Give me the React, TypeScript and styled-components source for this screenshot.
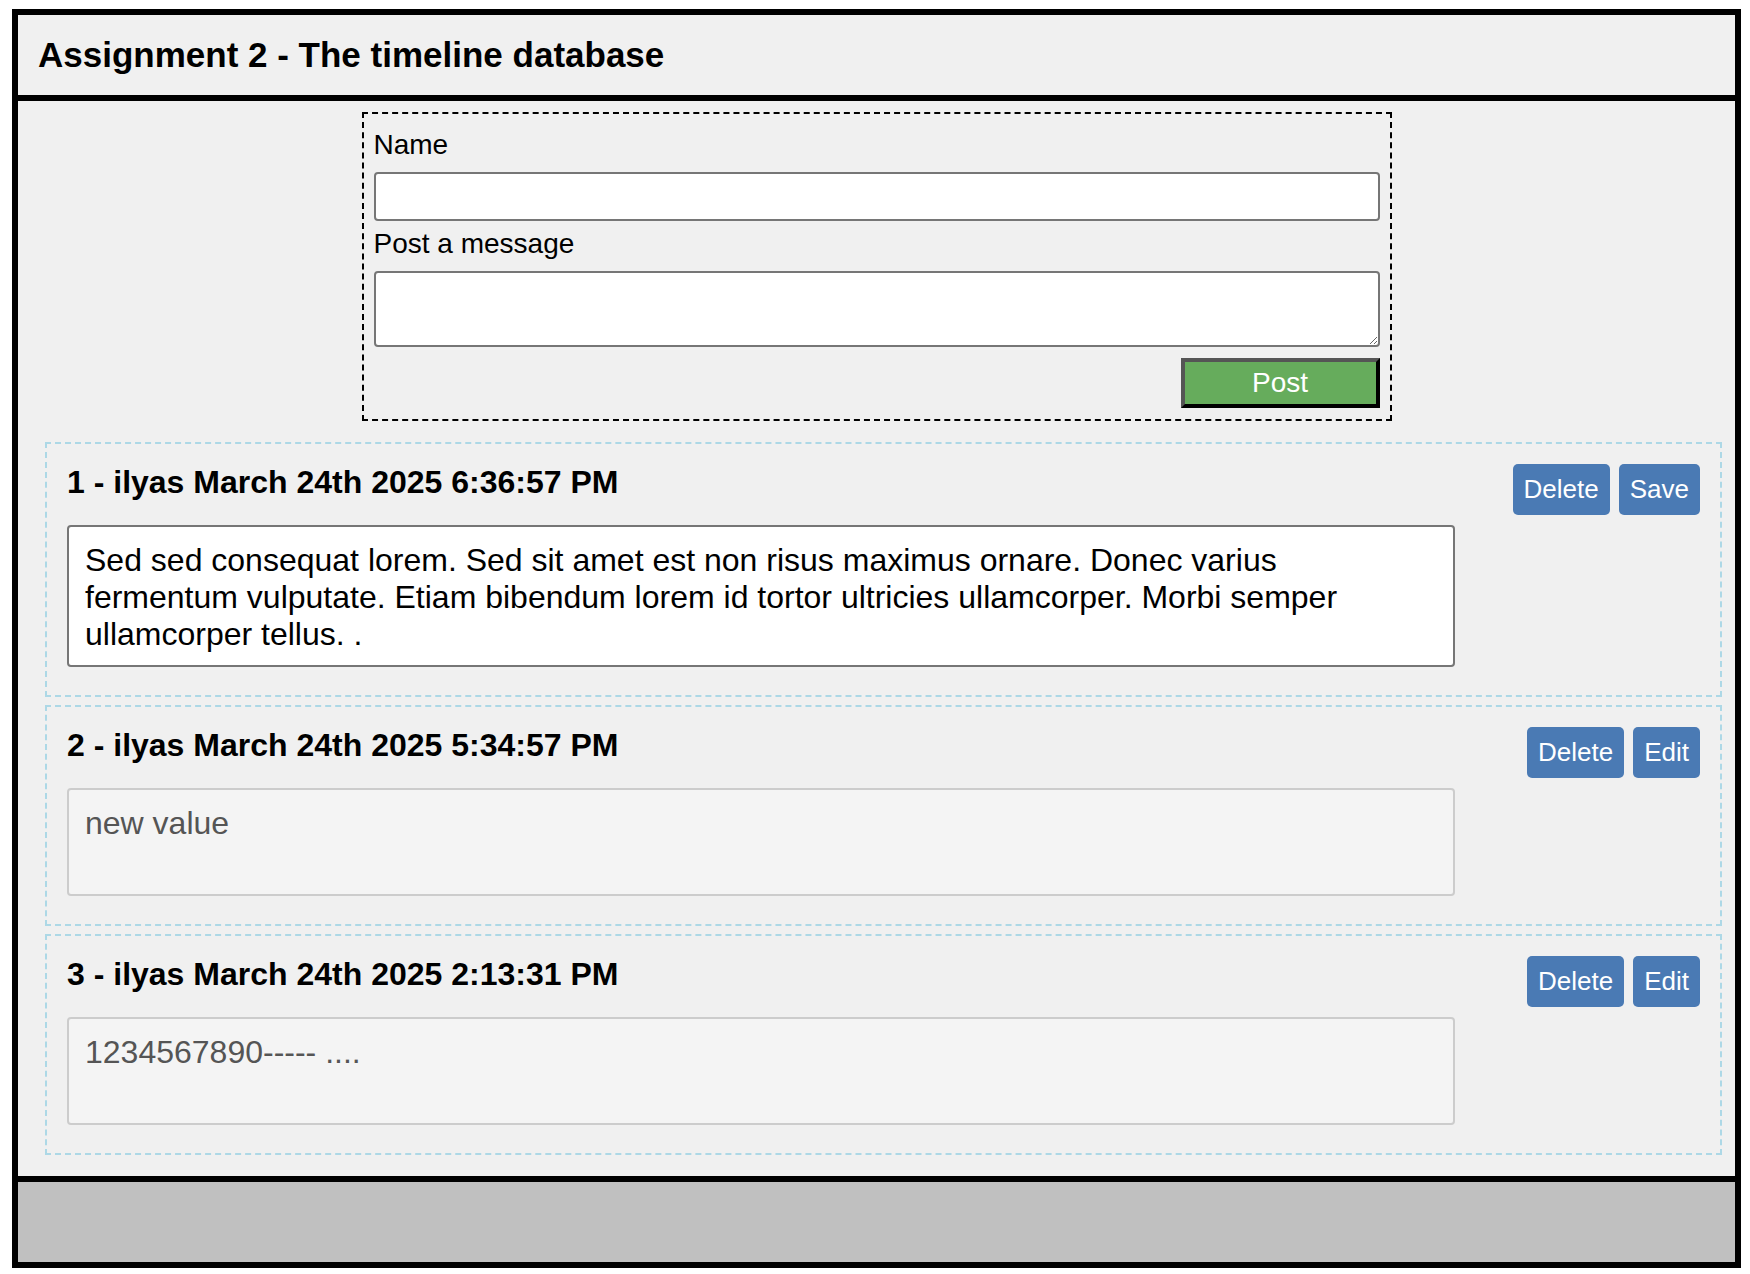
import React from 'react';
import styled, { createGlobalStyle } from 'styled-components';

const GlobalStyle = createGlobalStyle`
  html, body {
    margin: 0;
    padding: 0;
    background: #ffffff;
  }
  body {
    font-family: "Liberation Sans", Arial, sans-serif;
    color: #000;
  }
  *, *::before, *::after {
    box-sizing: border-box;
  }
`;

const Frame = styled.div`
  margin: 9px 9px 6px 12px;
  border: 6px solid #000;
  display: flex;
  flex-direction: column;
`;

const Header = styled.header`
  background: #f0f0f0;
  border-bottom: 6px solid #000;
  padding: 20px 20px;
`;

const Title = styled.h1`
  margin: 0;
  font-size: 35px;
  font-weight: bold;
  line-height: 40px;
`;

const Main = styled.main`
  background: #f0f0f0;
  padding: 11px 0 21px;
  display: flex;
  flex-direction: column;
`;

const PostForm = styled.form`
  width: 1030px;
  margin: 0 auto 21px;
  border: 2px dashed #000;
  padding: 15px 10px 11px;
  display: flex;
  flex-direction: column;
`;

const FieldLabel = styled.label`
  display: block;
  font-size: 28px;
  line-height: 32px;
  margin-bottom: 11px;
`;

const NameInput = styled.input`
  display: block;
  width: 100%;
  height: 49px;
  margin: 0 0 7px;
  padding: 0 8px;
  border: 2px solid #767676;
  border-radius: 4px;
  background: #fff;
  font-family: inherit;
  font-size: 28px;
`;

const MessageInput = styled.textarea`
  display: block;
  width: 100%;
  height: 76px;
  margin: 0 0 11px;
  padding: 6px 8px;
  border: 2px solid #767676;
  border-radius: 4px;
  background: #fff;
  font-family: inherit;
  font-size: 28px;
`;

const PostButton = styled.button`
  align-self: flex-end;
  width: 199px;
  height: 50px;
  padding: 0;
  background: #66ac5c;
  color: #fff;
  font-family: inherit;
  font-size: 28px;
  border-width: 4px;
  border-style: solid;
  border-color: #555 #000 #000 #555;
`;

const PostCard = styled.article`
  margin: 0 13px 8px 27px;
  border: 2px dashed #add8e6;
  padding: 20px;
  display: flex;
  justify-content: space-between;
  align-items: flex-start;

  &:last-child {
    margin-bottom: 0;
  }
`;

const PostBody = styled.div`
  flex: 0 0 85%;
`;

const PostHeading = styled.h2`
  margin: 0 0 24px;
  font-size: 32px;
  font-weight: bold;
  line-height: 37px;
`;

const PostText = styled.textarea<{ $editing: boolean; $height: number }>`
  display: block;
  width: 100%;
  height: ${(p) => p.$height}px;
  margin: 0 0 8px;
  padding: 15px 40px 15px 16px;
  border: 2px solid ${(p) => (p.$editing ? '#767676' : '#cccccc')};
  border-radius: 4px;
  background: ${(p) => (p.$editing ? '#ffffff' : '#f4f4f4')};
  color: ${(p) => (p.$editing ? '#000000' : '#555555')};
  font-family: inherit;
  font-size: 32px;
  line-height: 1.15;
  resize: none;
  overflow: hidden;
`;

const Actions = styled.div`
  display: flex;
  gap: 9px;
`;

const ActionButton = styled.button`
  background: #4a7ab4;
  color: #fff;
  border: none;
  border-radius: 5px;
  font-family: inherit;
  font-size: 26px;
  line-height: 31px;
  padding: 10px 11px;
`;

const Footer = styled.footer`
  height: 86px;
  background: #c0c0c0;
  border-top: 6px solid #000;
`;

type Entry = {
  id: number;
  name: string;
  date: string;
  text: string;
  editing: boolean;
  height: number;
};

const entries: Entry[] = [
  {
    id: 1,
    name: 'ilyas',
    date: 'March 24th 2025 6:36:57 PM',
    text:
      'Sed sed consequat lorem. Sed sit amet est non risus maximus ornare. Donec varius fermentum vulputate. Etiam bibendum lorem id tortor ultricies ullamcorper. Morbi semper ullamcorper tellus. .',
    editing: true,
    height: 142,
  },
  {
    id: 2,
    name: 'ilyas',
    date: 'March 24th 2025 5:34:57 PM',
    text: 'new value',
    editing: false,
    height: 108,
  },
  {
    id: 3,
    name: 'ilyas',
    date: 'March 24th 2025 2:13:31 PM',
    text: '1234567890----- ....',
    editing: false,
    height: 108,
  },
];

export default function App() {
  return (
    <>
      <GlobalStyle />
      <Frame>
        <Header>
          <Title>Assignment 2 - The timeline database</Title>
        </Header>
        <Main>
          <PostForm onSubmit={(e) => e.preventDefault()}>
            <FieldLabel htmlFor="name">Name</FieldLabel>
            <NameInput id="name" type="text" />
            <FieldLabel htmlFor="message">Post a message</FieldLabel>
            <MessageInput id="message" />
            <PostButton type="submit">Post</PostButton>
          </PostForm>
          {entries.map((e) => (
            <PostCard key={e.id}>
              <PostBody>
                <PostHeading>
                  {e.id} - {e.name} {e.date}
                </PostHeading>
                <PostText
                  $editing={e.editing}
                  $height={e.height}
                  readOnly={!e.editing}
                  defaultValue={e.text}
                />
              </PostBody>
              <Actions>
                <ActionButton>Delete</ActionButton>
                <ActionButton>{e.editing ? 'Save' : 'Edit'}</ActionButton>
              </Actions>
            </PostCard>
          ))}
        </Main>
        <Footer />
      </Frame>
    </>
  );
}
